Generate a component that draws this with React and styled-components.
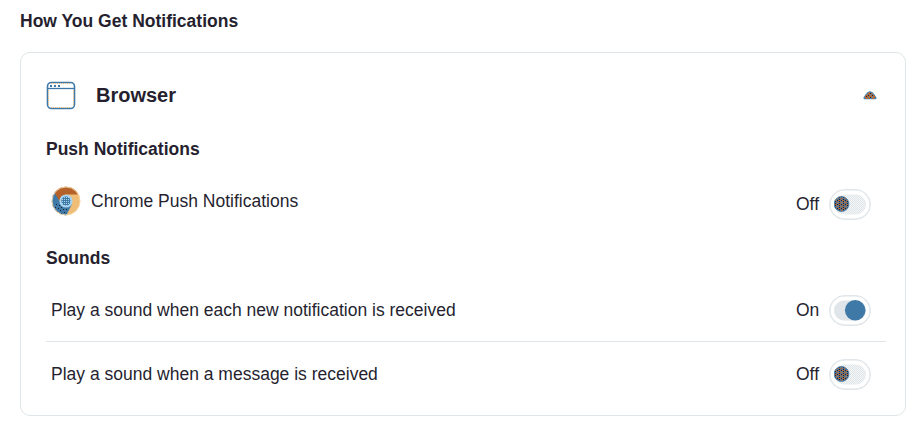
import React from "react";
import styled, { createGlobalStyle } from "styled-components";

const GlobalStyle = createGlobalStyle`
  * { box-sizing: border-box; }
  body {
    margin: 0;
    background: #fff;
    color: #261f2f;
    font-family: "Liberation Sans", Arial, sans-serif;
    font-size: 17.5px;
  }
`;

const Page = styled.main`
  height: 424px;
  padding: 0 15px 8px 20px;
  display: flex;
  flex-direction: column;
  overflow: hidden;
`;

const PageTitle = styled.h1`
  margin: 0;
  height: 52px;
  padding-top: 11px;
  font-size: 17.5px;
  line-height: 20px;
`;

const Card = styled.section`
  flex: 1;
  border: 1px solid #dfe5e8;
  border-radius: 10px;
  padding: 0 19px 0 25px;
`;

const CardHeader = styled.header`
  display: flex;
  align-items: center;
  height: 84px;
  padding-right: 9px;
`;

const CardTitle = styled.h2`
  flex: 1;
  margin: 0 0 0 20px;
  font-size: 20px;
  line-height: 24px;
`;

const SectionTitle = styled.h3`
  margin: 0;
  height: ${(p) => p.$height}px;
  font-size: 17.5px;
  line-height: ${(p) => p.$height}px;
`;

const SettingRow = styled.div`
  display: flex;
  align-items: center;
  height: ${(p) => p.$height}px;
  padding: ${(p) => p.$top || 0}px 15px 0 5px;
  border-bottom: ${(p) => (p.$divided ? "1px solid #dfe5e8" : "0")};
`;

const Label = styled.span`
  display: flex;
  flex: 1;
  align-items: center;
  gap: 10px;
  padding-bottom: ${(p) => p.$raise || 0}px;
`;

const State = styled.span`
  width: 33px;
`;

const Switch = styled.button`
  width: 42px;
  height: 31px;
  padding: 4px;
  border: 1px solid #dfe5e8;
  border-radius: 16px;
  background: #fff;
  box-shadow: inset 0 0 0 0.6px #dfe5e8;
`;

const SwitchArt = styled.svg`
  display: block;
  width: 32px;
  height: 21px;
`;

function BrowserIcon() {
  return (
    <svg width="30" height="30" viewBox="0 0 30 30" fill="none">
      <rect x="1.5" y="2.5" width="27" height="26" rx="4" stroke="#3f79a8" strokeWidth="1.6" />
      <path d="M1.5 8.5h27" stroke="#3f79a8" strokeWidth="1.3" />
      <path d="M5 3.5h20M5 27.5h20M2.5 10v15M27.5 10v15" stroke="#eebd7c" strokeWidth="1" strokeDasharray="1 1" />
      <path d="M4 6h2M8 6h2M12 6h2" stroke="#3f79a8" strokeWidth="2" />
    </svg>
  );
}

function ChromeIcon() {
  return (
    <svg width="30" height="30" viewBox="-15 -15 30 30">
      <defs>
        <clipPath id="disc"><circle r="14.2" /></clipPath>
        <pattern id="weave" width="2" height="2" patternUnits="userSpaceOnUse">
          <rect width="2" height="2" fill="#3f79a8" />
          <path d="M0 0h1v1H0z" fill="#a9d5ee" />
        </pattern>
      </defs>
      <g clipPath="url(#disc)">
        <rect x="-15" y="-15" width="30" height="30" fill="#efbd76" />
        <path d="M-15-15V15H0L6 3 0 0-12-15z" fill="#3f79a8" />
        <path d="M-10 3h1v1h-1zM-7 4h1v1h-1zM-11 6h1v1h-1zM-8 7h1v1h-1zM-5 6h1v1h-1zM-9 10h1v1h-1zM-6 9h1v1h-1zM-3 8h1v1h-1zM-5 12h1v1h-1zM-2 11h1v1h-1zM0 8h1v1H0z" fill="#261f2f" />
        <path d="M-11.5-8.5L-6 1 0 0V-6.5H15V-15H-12z" fill="#b5622a" />
      </g>
      <circle r="14" fill="none" stroke="#f5d9a9" strokeWidth=".9" />
      <circle r="6.6" fill="#a9d5ee" />
      <circle r="4.6" fill="url(#weave)" />
    </svg>
  );
}

function CaretIcon() {
  return (
    <svg width="14" height="12" viewBox="0 0 14 12">
      <path d="M.7 10.3V8.2L2.5 5.5 4.6 3.3Q7 1.3 9.4 3.3L11.5 5.5 13.3 8.2v2.1z" fill="#4c82ab" />
      <path d="M6 3h1v1H6zM5 4h2v1H5zM8 4h1v1H8zM4 5h1v1H4zM6 5h2v1H6zM9 5h1v1H9zM3 6h2v1H3zM6 6h1v1H6zM8 6h1v1H8zM10 6h1v1h-1zM2 7h1v1H2zM4 7h2v1H4zM7 7h2v1H7zM10 7h2v1h-2zM2 8h2v1H2zM5 8h2v1H5zM8 8h1v1H8zM10 8h2v1h-2zM3 9h2v1H3zM6 9h1v1H6zM9 9h2v1H9z" fill="#bd672b" />
      <path d="M7 4h1v1H7zM5 6h1v1H5zM9 6h1v1H9zM3 7h1v1H3zM7 8h1v1H7z" fill="#261f2f" />
    </svg>
  );
}

function Toggle({ on, label }) {
  const id = React.useId();
  return (
    <>
      <State>{on ? "On" : "Off"}</State>
      <Switch role="switch" aria-checked={on} aria-label={label}>
        <SwitchArt viewBox="0 0 32 21">
          <defs>
            <pattern id={id + "track"} width="2" height="2" patternUnits="userSpaceOnUse">
              <rect width="2" height="2" fill="#f3f6f7" />
              <path d="M0 0h1v1H0zM1 1h1v1H1z" fill="#dfe5e8" />
            </pattern>
            <pattern id={id + "knob"} width="4" height="4" patternUnits="userSpaceOnUse">
              <rect width="4" height="4" fill="#3f79a8" />
              <path d="M0 0h1v1H0zM2 1h1v1H2zM0 2h1v1H0zM2 3h1v1H2zM3 0h1v1H3zM1 2h1v1H1z" fill="#bd672b" />
              <path d="M1 1h1v1H1zM3 2h1v1H3zM1 3h1v1H1z" fill="#261f2f" />
            </pattern>
          </defs>
          <rect y=".5" width="32" height="20" rx="10" fill={on ? "#dfe5e8" : `url(#${id}track)`} />
          {on ? (
            <circle cx="21.2" cy="10.3" r="10.3" fill="#3f79a8" />
          ) : (
            <circle cx="7.5" cy="10" r="7.4" fill={`url(#${id}knob)`} stroke="#3f79a8" strokeWidth=".9" />
          )}
        </SwitchArt>
      </Switch>
    </>
  );
}

export default function App() {
  return (
    <Page>
      <GlobalStyle />
      <PageTitle>How You Get Notifications</PageTitle>
      <Card>
        <CardHeader>
          <BrowserIcon />
          <CardTitle>Browser</CardTitle>
          <CaretIcon />
        </CardHeader>
        <SectionTitle $height={24}>Push Notifications</SectionTitle>
        <SettingRow $height={86}>
          <Label $raise={6}>
            <ChromeIcon />
            <span>Chrome Push Notifications</span>
          </Label>
          <Toggle label="Chrome push notifications" />
        </SettingRow>
        <SectionTitle $height={22}>Sounds</SectionTitle>
        <SettingRow $height={73} $top={10} $divided>
          <Label>Play a sound when each new notification is received</Label>
          <Toggle on label="Notification sound" />
        </SettingRow>
        <SettingRow $height={64}>
          <Label>Play a sound when a message is received</Label>
          <Toggle label="Message sound" />
        </SettingRow>
      </Card>
    </Page>
  );
}
